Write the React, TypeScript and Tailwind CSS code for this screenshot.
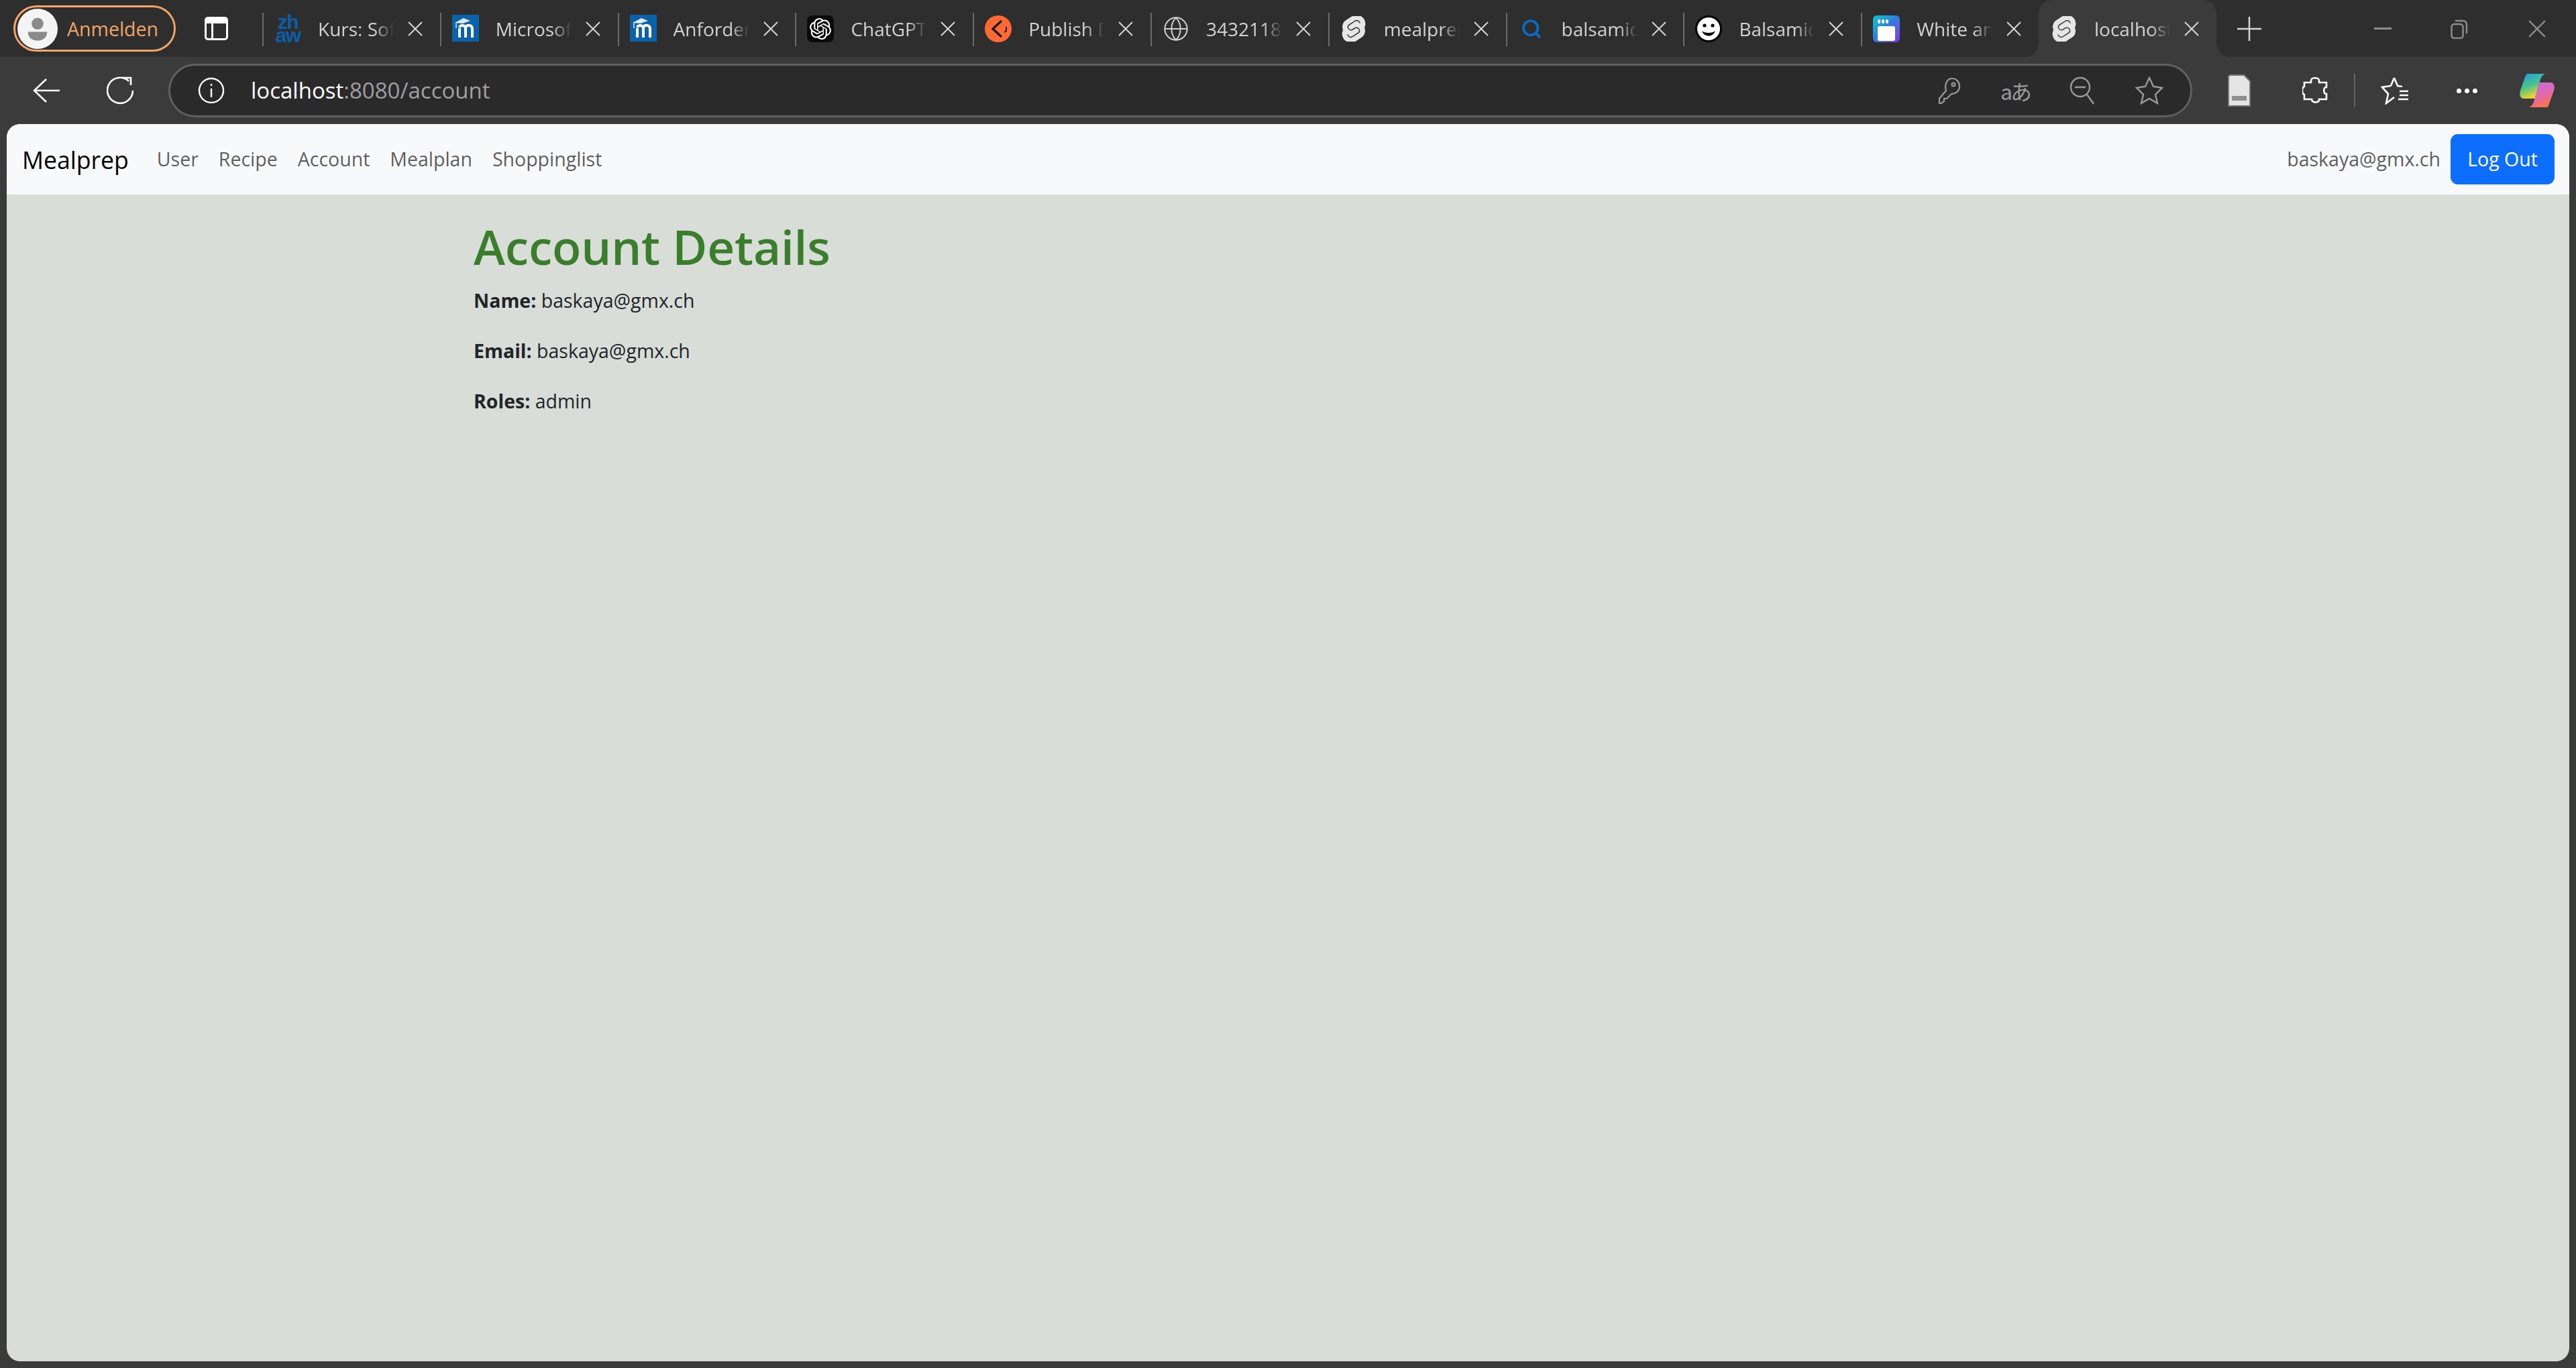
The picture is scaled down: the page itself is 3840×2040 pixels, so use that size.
import React from 'react';
import { Globe, Search } from 'lucide-react';
import { SiOpenai, SiSvelte } from 'react-icons/si';

const MoodleIcon = () => (
  <div className="w-[40px] h-[40px] mt-[-2px] bg-[#0a62a9] flex items-center justify-center">
    <svg viewBox="0 0 40 40" className="w-[40px] h-[40px]" fill="none">
      <path d="M4 12 L17 5 L27 9 L16 13 Z" fill="#dfe9f3" />
      <path d="M6 12 V20" stroke="#dfe9f3" strokeWidth="1.5" />
      <path d="M11 34 V20 M20 34 V20 M30 34 V21 C30 15 22 14 20 19 C18 15 12 15 11 19" stroke="#fff" strokeWidth="4" />
    </svg>
  </div>
);

const ZhawIcon = () => (
  <div className="w-[40px] h-[40px] flex flex-col items-center justify-center font-['Liberation_Sans',sans-serif] font-bold text-[#0a5ea8] text-[30px] leading-[20px] tracking-[-1.5px]">
    <span>zh</span>
    <span>aw</span>
  </div>
);

const GptIcon = () => (
  <div className="w-[40px] h-[40px] rounded-[8px] bg-[#0a0a0a] flex items-center justify-center text-white">
    <SiOpenai size={32} />
  </div>
);

const PublishIcon = () => (
  <svg viewBox="0 0 40 40" className="w-[40px] h-[40px]">
    <circle cx="20" cy="20" r="20" fill="#ff6a33" />
    <path d="M25 8 L12 20 L25 32" fill="none" stroke="#1c1c1c" strokeWidth="3.5" />
    <path d="M32 17 V23 L29 25" fill="none" stroke="#1c1c1c" strokeWidth="2" />
  </svg>
);

const BalsamiqIcon = () => (
  <svg viewBox="0 0 40 40" className="w-[40px] h-[40px]">
    <circle cx="20" cy="20" r="20" fill="#000" />
    <circle cx="20" cy="20" r="17" fill="#fff" />
    <circle cx="14" cy="15" r="2.6" fill="#000" />
    <circle cx="26" cy="15" r="2.6" fill="#000" />
    <path d="M10 23 C13 33 27 33 30 23 C26 27 14 27 10 23 Z" fill="#000" />
  </svg>
);

const WindowIcon = () => (
  <div className="w-[40px] h-[40px] rounded-[6px] bg-gradient-to-br from-[#0bc4c8] via-[#2e7be0] to-[#7a1ff0] flex flex-col px-[7px] pt-[6px] gap-[4px]">
    <div className="flex gap-[2px]">
      <span className="w-[4px] h-[6px] rounded-full bg-white" />
      <span className="w-[4px] h-[6px] rounded-full bg-white" />
      <span className="w-[4px] h-[6px] rounded-full bg-white" />
    </div>
    <div className="w-[26px] h-[22px] rounded-[3px] bg-white" />
  </div>
);

const SvelteIcon = () => <SiSvelte size={38} color="#e6e6e6" stroke="#e6e6e6" strokeWidth={2} />;

const CloseIcon = ({ size = 22, color = '#d6d6d6' }: { size?: number; color?: string }) => (
  <svg viewBox="0 0 22 22" width={size} height={size} fill="none" stroke={color} strokeWidth="2">
    <path d="M1 1 L21 21 M21 1 L1 21" />
  </svg>
);

const tabs = [
  { title: 'Kurs: Software', icon: <ZhawIcon /> },
  { title: 'Microsoft', icon: <MoodleIcon /> },
  { title: 'Anforderungen', icon: <MoodleIcon /> },
  { title: 'ChatGPT', icon: <GptIcon /> },
  { title: 'Publish Docs', icon: <PublishIcon /> },
  { title: '34321186', icon: <Globe size={40} color="#cfcfcf" strokeWidth={1.2} /> },
  { title: 'mealprep', icon: <SvelteIcon /> },
  { title: 'balsamiq', icon: <Search size={32} color="#0a6cc4" strokeWidth={2.8} /> },
  { title: 'Balsamiq', icon: <BalsamiqIcon /> },
  { title: 'White and', icon: <WindowIcon /> },
];

const Tab = ({ title, icon, active }: { title: string; icon: React.ReactNode; active?: boolean }) => (
  <div className={`relative w-[264.8px] h-[85px] flex items-center shrink-0 ${active ? 'bg-[#3b3b3b] rounded-t-[20px]' : ''}`}>
    {!active && <div className="absolute left-0 top-[19px] w-[2px] h-[50px] bg-[#6a6a6a]" />}
    {active && (
      <>
        <div className="absolute left-[-20px] bottom-0 w-[20px] h-[20px] bg-[radial-gradient(circle_at_0_0,#2e2e2e_19.5px,#3b3b3b_20.5px)]" />
        <div className="absolute right-[-20px] bottom-0 w-[20px] h-[20px] bg-[radial-gradient(circle_at_100%_0,#2e2e2e_19.5px,#3b3b3b_20.5px)]" />
      </>
    )}
    <div className="w-[40px] h-[40px] ml-[18px] flex items-center justify-center shrink-0">{icon}</div>
    <div className="ml-[25px] w-[113px] overflow-hidden whitespace-nowrap text-[28px] leading-[40px] text-[#d2d2d2] [mask-image:linear-gradient(to_right,black_75%,transparent_100%)]">
      {title}
    </div>
    <div className="ml-[21px]">
      <CloseIcon />
    </div>
  </div>
);

export default function App() {
  const links = ['User', 'Recipe', 'Account', 'Mealplan', 'Shoppinglist'];

  return (
    <div className="w-screen h-screen flex flex-col overflow-hidden bg-[#3b3b3b] font-['Open_Sans',sans-serif]">
      {/* tab strip */}
      <div className="h-[85px] shrink-0 bg-[#2e2e2e] flex items-center pl-[20px]">
        <div className="w-[242px] h-[69px] rounded-full border-[3px] border-[#f2a566] flex items-center pl-[3px] shrink-0">
          <div className="w-[60px] h-[60px] rounded-full bg-[#f4f4f4] flex items-center justify-center">
            <svg viewBox="0 0 40 40" className="w-[44px] h-[44px]">
              <circle cx="20" cy="13" r="8" fill="#8a8a8a" />
              <path d="M7 24 H33 C33 32 27 36 20 36 C13 36 7 32 7 24 Z" fill="#8a8a8a" />
            </svg>
          </div>
          <span className="ml-[14px] text-[28.5px] leading-[40px] text-[#f2a566]">Anmelden</span>
        </div>
        <div className="ml-[43px] w-[35px] h-[35px] rounded-[5px] border-[3px] border-white flex flex-col shrink-0">
          <div className="h-[7px] bg-white" />
          <div className="w-[3px] flex-1 ml-[7px] bg-white" />
        </div>
        <div className="ml-[51px] flex items-center">
          {tabs.map((t) => (
            <Tab key={t.title} title={t.title} icon={t.icon} />
          ))}
          <Tab title="localhost" icon={<SvelteIcon />} active />
        </div>
        <svg viewBox="0 0 36 36" className="ml-[31px] w-[36px] h-[36px] shrink-0" stroke="#d6d6d6" strokeWidth="2.5">
          <path d="M18 0 V36 M0 18 H36" />
        </svg>
        <div className="ml-[168px] w-[26px] h-[3px] bg-[#8c8c8c] shrink-0" />
        <svg viewBox="0 0 26 30" className="ml-[88px] w-[26px] h-[30px] shrink-0" fill="none" stroke="#8c8c8c" strokeWidth="2.5">
          <rect x="1.5" y="8" width="17" height="21" rx="4" />
          <path d="M7 3 H18 C22 3 24 5 24 9 V22" />
        </svg>
        <div className="ml-[90px] shrink-0">
          <CloseIcon size={26} color="#8c8c8c" />
        </div>
      </div>

      {/* toolbar */}
      <div className="h-[100px] shrink-0 flex items-center">
        <svg viewBox="0 0 42 36" className="ml-[49px] w-[42px] h-[36px] shrink-0" fill="none" stroke="#fff" strokeWidth="2.6">
          <path d="M40 18 H2 M20 1 L2 18 L20 35" />
        </svg>
        <svg viewBox="0 0 42 42" className="ml-[68px] w-[42px] h-[42px] shrink-0" fill="none" stroke="#fff" strokeWidth="2.6">
          <path d="M33 7 A19 19 0 1 0 39 21" />
          <path d="M24 2 H36 V13" />
        </svg>
        {/* address bar */}
        <div className="ml-[50px] w-[3017px] h-[80px] shrink-0 rounded-full border-[3px] border-[#5f5f5f] bg-[#2a2a2a] flex items-center pl-[41px] pr-[40px]">
          <svg viewBox="0 0 40 40" className="w-[40px] h-[40px]" fill="none" stroke="#fff" strokeWidth="2.4">
            <circle cx="20" cy="20" r="18" />
            <path d="M20 17 V30 M20 10 V13" />
          </svg>
          <div className="ml-[39px] text-[33px] leading-[44px] text-white">
            localhost<span className="text-[#a0a0a0]">:8080/account</span>
          </div>
          <div className="ml-auto flex items-center gap-[60px]">
            <svg viewBox="0 0 34 40" className="w-[34px] h-[40px]" fill="none" stroke="#9a9a9a" strokeWidth="2.2">
              <path d="M21 2 C28 2 32 8 32 14 C32 21 26 25 20 25 L13 32 H9 V36 L5 39 H2 V32 L12 20 C9 10 14 2 21 2 Z" />
              <circle cx="23" cy="11" r="2.4" />
            </svg>
            <div className="w-[42px] h-[40px] flex items-center justify-center whitespace-nowrap text-[32px] leading-[40px] text-[#9a9a9a] tracking-[-3px] font-['Noto_Sans_CJK_JP',sans-serif]">aあ</div>
            <svg viewBox="0 0 38 42" className="w-[38px] h-[42px]" fill="none" stroke="#9a9a9a" strokeWidth="2.4">
              <circle cx="16" cy="16" r="14" />
              <path d="M8 16 H24 M26 27 L36 41" />
            </svg>
            <svg viewBox="0 0 42 42" className="w-[42px] h-[42px]" fill="none" stroke="#9a9a9a" strokeWidth="2.4">
              <path d="M21 2 L27 15 L40 17 L30 27 L33 40 L21 33 L9 40 L12 27 L2 17 L15 15 Z" />
            </svg>
          </div>
        </div>
        <svg viewBox="0 0 34 48" className="ml-[53px] w-[34px] h-[48px] shrink-0">
          <path d="M3 1 H24 L33 10 V47 H1 V3 Z" fill="#e4e4e4" stroke="#777" strokeWidth="2" />
          <rect x="6" y="32" width="22" height="7" fill="#8f8f8f" />
        </svg>
        <svg viewBox="0 0 38 42" className="ml-[77px] w-[38px] h-[42px] shrink-0" fill="none" stroke="#fff" strokeWidth="2.6">
          <path d="M13 6 C13 1 25 1 25 6 V9 H36 V16 C31 15 31 27 36 26 V34 H25 C26 40 14 40 14 34 H3 V27 C-1 26 -1 16 3 15 V9 H13 Z" />
        </svg>
        <div className="ml-[39px] w-[2px] h-[50px] bg-[#666] shrink-0" />
        <svg viewBox="0 0 42 42" className="ml-[38px] w-[42px] h-[42px] shrink-0" fill="none" stroke="#fff" strokeWidth="2.6">
          <path d="M20 2 L25 14 L32 15 M15 14 L2 16 L11 26 L8 40 L20 31 M15 14 L20 2" />
          <path d="M28 22 H41 M28 28 H41 M26 34 H41" />
        </svg>
        <div className="ml-[71px] flex gap-[5px] shrink-0">
          <span className="w-[7px] h-[7px] rounded-full bg-white" />
          <span className="w-[7px] h-[7px] rounded-full bg-white" />
          <span className="w-[7px] h-[7px] rounded-full bg-white" />
        </div>
        <svg viewBox="0 0 56 52" className="ml-[61px] w-[56px] h-[52px] shrink-0">
          <defs>
            <linearGradient id="cpa" x1="0" y1="0" x2="0.4" y2="1">
              <stop offset="0" stopColor="#1b9de8" />
              <stop offset="0.55" stopColor="#4cc38a" />
              <stop offset="1" stopColor="#f5d327" />
            </linearGradient>
            <linearGradient id="cpb" x1="0.2" y1="0" x2="0.6" y2="1">
              <stop offset="0" stopColor="#c86adf" />
              <stop offset="0.6" stopColor="#e46aa8" />
              <stop offset="1" stopColor="#f7763c" />
            </linearGradient>
          </defs>
          <path d="M14 1 H40 C35 3 33 8 31 16 L25 38 H8 C3 38 1 32 3 26 L10 6 C11 3 12 1 14 1 Z" fill="url(#cpa)" />
          <path d="M42 51 H16 C21 49 23 44 25 36 L31 14 H48 C53 14 55 20 53 26 L46 46 C45 49 44 51 42 51 Z" fill="url(#cpb)" />
        </svg>
      </div>

      {/* page */}
      <div className="flex-1 mx-[10px] mb-[10px] rounded-[20px] overflow-hidden bg-[#d8ddd7] flex flex-col">
        <nav className="h-[105px] shrink-0 bg-[#f8f9fa] flex items-center pl-[23px] pr-[22px] text-[28.5px] leading-[45px]">
          <a className="text-[35.6px] leading-[56px] text-black">Mealprep</a>
          <ul className="ml-[42px] flex gap-[30px] text-black/65">
            {links.map((l) => (
              <li key={l}>{l}</li>
            ))}
          </ul>
          <span className="ml-auto text-black/65">baskaya@gmx.ch</span>
          <button className="ml-[15px] w-[155px] h-[75px] rounded-[11px] bg-[#0d6efd] text-white">Log Out</button>
        </nav>

        <main className="pl-[696px] pt-[33px] text-[28.5px] leading-[45px] text-[#212529]">
          <h1 className="text-[71px] leading-[90px] font-semibold tracking-[-0.15px] text-[#3a7d2c] mb-[13px]">Account Details</h1>
          <p className="mb-[30px]"><strong className="font-bold">Name:</strong> baskaya@gmx.ch</p>
          <p className="mb-[30px]"><strong className="font-bold">Email:</strong> baskaya@gmx.ch</p>
          <p className="mb-[30px]"><strong className="font-bold">Roles:</strong> admin</p>
        </main>
      </div>
    </div>
  );
}
